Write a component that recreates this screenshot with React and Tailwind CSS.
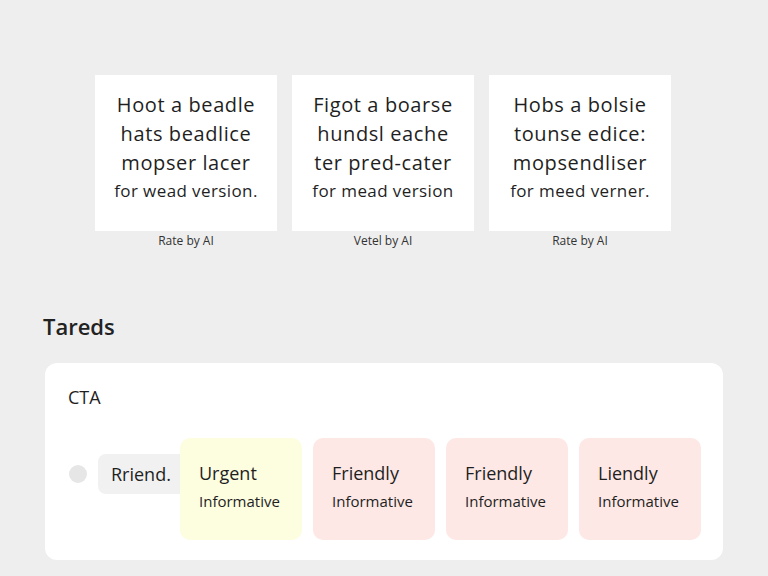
import React from "react";

const topCards = [
  {
    lines: ["Hoot a beadle", "hats beadlice", "mopser lacer"],
    last: "for wead version.",
    label: "Rate by AI",
  },
  {
    lines: ["Figot a boarse", "hundsl eache", "ter pred-cater"],
    last: "for mead version",
    label: "Vetel by AI",
  },
  {
    lines: ["Hobs a bolsie", "tounse edice:", "mopsendliser"],
    last: "for meed verner.",
    label: "Rate by AI",
  },
];

const tones = [
  { title: "Urgent", sub: "Informative", bg: "bg-[#fdfde0]" },
  { title: "Friendly", sub: "Informative", bg: "bg-[#fde8e5]" },
  { title: "Friendly", sub: "Informative", bg: "bg-[#fde8e5]" },
  { title: "Liendly", sub: "Informative", bg: "bg-[#fde8e5]" },
];

const App = () => {
  return (
    <div className="min-h-[576px] bg-[#eeeeee] text-[#1f1f1f] font-['Open_Sans','Noto_Sans',sans-serif] overflow-hidden">
      <div className="flex gap-[15px] pl-[95px] pt-[75px]">
        {topCards.map((c, i) => (
          <div key={i} className="flex flex-col items-center">
            <div className="w-[182px] h-[156px] bg-white flex flex-col items-center justify-center pb-[12px] font-medium">
              {c.lines.map((l, j) => (
                <div key={j} className="text-[20px] leading-[29px] tracking-[0.6px]">
                  {l}
                </div>
              ))}
              <div className="text-[17px] leading-[27px] tracking-[0.4px]">{c.last}</div>
            </div>
            <div className="mt-[2px] text-[12px] text-[#333] leading-[16px]">{c.label}</div>
          </div>
        ))}
      </div>

      <h2 className="ml-[43px] mt-[63px] text-[22px] font-semibold leading-[28px] text-[#222]">Tareds</h2>

      <div className="mx-[45px] mt-[23px] bg-white rounded-[12px] h-[197px] px-[23px] pt-[22px]">
        <div className="text-[18px] leading-[24px]">CTA</div>
        <div className="flex items-start mt-[29px]">
          <div className="shrink-0 w-[18px] h-[18px] rounded-full bg-[#e6e6e6] ml-[1px] mt-[27px]"></div>
          <div className="shrink-0 ml-[11px] mt-[16px] h-[40px] w-[90px] -mr-[8px] rounded-[8px] bg-[#f1f1f1] flex items-center pl-[13px] text-[18px]">
            Rriend.
          </div>
          <div className="shrink-0 flex gap-[11px] relative">
            {tones.map((t, i) => (
              <div
                key={i}
                className={`shrink-0 w-[122px] h-[102px] rounded-[10px] ${t.bg} flex flex-col justify-center pl-[19px] pb-[4px]`}
              >
                <div className="text-[18px] leading-[26px]">{t.title}</div>
                <div className="text-[15px] leading-[26px] mt-[2px]">{t.sub}</div>
              </div>
            ))}
          </div>
        </div>
      </div>
    </div>
  );
};

export default App;
